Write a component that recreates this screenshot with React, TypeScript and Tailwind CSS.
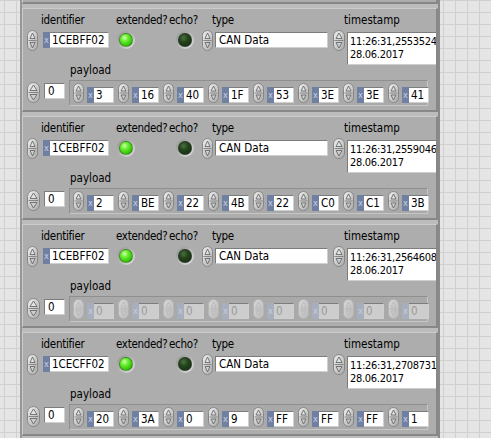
import type { ReactNode } from 'react';

const FONT = "font-['DejaVu_Sans_Condensed','DejaVu_Sans','Liberation_Sans',sans-serif] [font-stretch:condensed]";

type Msg = {
  id: string;
  ext: boolean;
  ts: string;
  date: string;
  payload: string[];
  disabled?: boolean;
};

const MESSAGES: Msg[] = [
  { id: '1CEBFF02', ext: true, ts: '11:26:31,2547963', date: '28.06.2017', payload: ['7', '2A', '40', '1F', '53', '3E', '3E', '41'] },
  { id: '1CEBFF02', ext: true, ts: '11:26:31,2553524', date: '28.06.2017', payload: ['3', '16', '40', '1F', '53', '3E', '3E', '41'] },
  { id: '1CEBFF02', ext: true, ts: '11:26:31,2559046', date: '28.06.2017', payload: ['2', 'BE', '22', '4B', '22', 'C0', 'C1', '3B'] },
  { id: '1CEBFF02', ext: true, ts: '11:26:31,2564608', date: '28.06.2017', payload: ['0', '0', '0', '0', '0', '0', '0', '0'], disabled: true },
  { id: '1CECFF02', ext: true, ts: '11:26:31,2708731', date: '28.06.2017', payload: ['20', '3A', '0', '9', 'FF', 'FF', 'FF', '1'] },
];

/** LabVIEW-style increment/decrement arrows. */
function Spinner({ w = 11, h = 20, dim = false }: { w?: number; h?: number; dim?: boolean }) {
  const cx = w / 2;
  const mid = h / 2;
  const edge = dim ? '#b4b4b4' : '#868686';
  const arrow = dim ? '#b8b8b8' : '#6a6a6a';
  return (
    <svg width={w} height={h} viewBox={`0 0 ${w} ${h}`} className="shrink-0">
      <defs>
        <linearGradient id={dim ? 'spin-dim' : 'spin'} x1="0" y1="0" x2="1" y2="1">
          <stop offset="0" stopColor={dim ? '#d8d8d8' : '#f2f2f2'} />
          <stop offset="1" stopColor={dim ? '#bcbcbc' : '#a9a9a9'} />
        </linearGradient>
      </defs>
      <rect x="0.5" y="0.5" width={w - 1} height={h - 1} rx={(w - 1) / 2} fill={`url(#${dim ? 'spin-dim' : 'spin'})`} stroke={edge} />
      <line x1="1.5" x2={w - 1.5} y1={mid} y2={mid} stroke={edge} />
      <path d={`M${cx} 3 L${w - 3} ${mid - 2} L3 ${mid - 2} Z`} fill={dim ? '#d0d0d0' : '#e4e4e4'} stroke={arrow} strokeWidth="0.9" strokeLinejoin="round" />
      <path d={`M${cx} ${h - 3} L${w - 3} ${mid + 2} L3 ${mid + 2} Z`} fill={dim ? '#c8c8c8' : '#cfcfcf'} stroke={arrow} strokeWidth="0.9" strokeLinejoin="round" />
    </svg>
  );
}

function Box({ className = '', dim = false, children }: { className?: string; dim?: boolean; children: ReactNode }) {
  return (
    <div
      className={`h-[16px] overflow-hidden whitespace-nowrap border border-t-[#7c7c7c] border-l-[#7c7c7c] border-r-[#cfcfcf] border-b-[#cfcfcf] pl-[2px] text-[11.5px] leading-[14px] ${
        dim ? 'bg-[#cdcdcd] text-[#9a9a9a]' : 'bg-white text-black'
      } ${className}`}
    >
      {children}
    </div>
  );
}

function HexBox({ value, width, dim = false }: { value: string; width: number; dim?: boolean }) {
  return (
    <div className="flex h-[16px]">
      <div
        className={`flex w-[7px] items-center justify-center text-[9px] leading-none ${
          dim ? 'bg-[#a7afbf] text-[#c9ced8]' : 'bg-[#6f80a3] text-[#c6cfe0]'
        }`}
      >
        x
      </div>
      <Box dim={dim} className="border-l-0 pl-[1px]">
        <div style={{ width }}>{value}</div>
      </Box>
    </div>
  );
}

function Led({ on }: { on: boolean }) {
  return (
    <div className="h-[18px] w-[18px] shrink-0 rounded-full bg-[linear-gradient(135deg,#8e8e8e,#e2e2e2)] p-[2px]">
      <div
        className={`h-full w-full rounded-full border border-[#3a3a3a]/40 ${
          on
            ? 'bg-[radial-gradient(circle_at_38%_32%,#d8ffb8_0%,#72f03a_28%,#3fd10f_60%,#2a9e08_100%)]'
            : 'bg-[radial-gradient(circle_at_38%_32%,#4c7040_0%,#23431a_40%,#12290c_100%)]'
        }`}
      />
    </div>
  );
}

function Cluster({ m }: { m: Msg }) {
  return (
    <div className="h-[104px] shrink-0 overflow-hidden border-t border-l border-b-2 border-r-2 border-t-[#cbcbcb] border-l-[#cbcbcb] border-b-[#878787] border-r-[#878787] bg-[#adadad]">
      <div className="flex items-start">
        {/* left block: labels, id, leds, type, payload caption */}
        <div className="w-[310px] shrink-0">
          <div className="mt-[4px] flex h-[14px] pl-[18px] text-[11.5px] leading-[14px] tracking-[-0.3px] text-black">
            <div className="w-[75px]">identifier</div>
            <div className="w-[53px]">extended?</div>
            <div className="w-[43px]">echo?</div>
            <div>type</div>
          </div>
          <div className="mt-[3px] flex h-[21px] items-start">
            <div className="ml-[4px]">
              <Spinner h={21} />
            </div>
            <div className="ml-[5px] mt-[2px]">
              <HexBox value={m.id} width={56} />
            </div>
            <div className="ml-[8px] mt-[1px]">
              <Led on={m.ext} />
            </div>
            <div className="ml-[41px] mt-[1px]">
              <Led on={false} />
            </div>
            <div className="ml-[8px]">
              <Spinner h={21} />
            </div>
            <Box className="ml-[2px] mt-[2px] w-[113px] pl-[3px]">CAN Data</Box>
          </div>
          <div className="mt-[12px] h-[14px] pl-[47px] text-[11.5px] leading-[14px] text-black">payload</div>
        </div>
        {/* timestamp */}
        <div className="shrink-0">
          <div className="mt-[4px] h-[14px] pl-[11px] text-[11.5px] leading-[14px] text-black">timestamp</div>
          <div className="mt-[3px] flex items-start">
            <Spinner w={12} h={21} />
            <div className="ml-[2px] mt-[2px] h-[33px] w-[100px] overflow-hidden whitespace-nowrap border border-t-[#7c7c7c] border-l-[#7c7c7c] border-r-[#cfcfcf] border-b-[#cfcfcf] bg-white pl-[2px] pt-[2px] text-[11px] leading-[13px] tracking-[-0.3px] text-black">
              <div>{m.ts}</div>
              <div>{m.date}</div>
            </div>
          </div>
        </div>
      </div>
      {/* payload row */}
      <div className="mt-[3px] flex items-start">
        <div className="ml-[4px] mt-[2px]">
          <Spinner w={13} h={21} />
        </div>
        <Box className="ml-[4px] mt-[3px] w-[21px] pl-[3px]">0</Box>
        <div className="ml-[4px] flex h-[26px] w-[359px] gap-[4px] border border-t-[#8f8f8f] border-l-[#8f8f8f] border-b-[#c6c6c6] border-r-[#c6c6c6] bg-[#a9a9a9] pl-[3px]">
          {m.payload.map((v, i) => (
            <div key={i} className="flex items-start">
              <div className="mt-[2px]">
                <Spinner dim={m.disabled} />
              </div>
              <div className="ml-[3px] mt-[6px]">
                <HexBox value={v} width={17} dim={m.disabled} />
              </div>
            </div>
          ))}
        </div>
      </div>
    </div>
  );
}

export default function App() {
  return (
    <div className={`flex h-[438px] w-[491px] overflow-hidden bg-[#e5e5e5] ${FONT}`}>
      <div className="h-full w-[20px] shrink-0 bg-[linear-gradient(to_right,#d0d0d0_1px,transparent_1px),linear-gradient(to_bottom,#d0d0d0_1px,transparent_1px)] bg-[size:12px_12px] bg-[position:4px_0px]" />
      <div className="h-full w-[420px] shrink-0 overflow-hidden border-l-2 border-r-2 border-l-[#979797] border-r-[#8a8a8a] bg-[#bcbcbc]">
        <div className="-mt-[100px] flex flex-col gap-[4px]">
          {MESSAGES.map((m, i) => (
            <Cluster key={i} m={m} />
          ))}
        </div>
      </div>
      <div className="h-full flex-1 bg-[linear-gradient(to_right,#d0d0d0_1px,transparent_1px),linear-gradient(to_bottom,#d0d0d0_1px,transparent_1px)] bg-[size:12px_12px] bg-[position:3px_0px]" />
    </div>
  );
}
